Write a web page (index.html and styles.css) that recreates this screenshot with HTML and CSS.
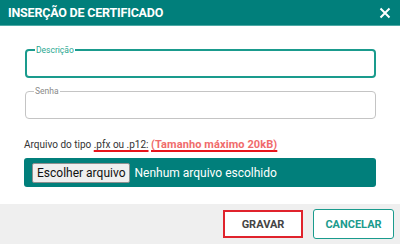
FILE: index.html
```html
<!DOCTYPE html>
<html lang="pt-BR">
<head>
    <meta charset="UTF-8">
    <meta name="viewport" content="width=device-width, initial-scale=1.0">
    <title>Inserção de Certificado</title>
    <link rel="stylesheet" href="styles.css">
</head>
<body>
    <div class="modal">
        <div class="modal-header">
            <h1>Inserção de Certificado</h1>
            <button class="close" type="button" aria-label="Fechar">
                <svg width="12" height="12" viewBox="0 0 12 12">
                    <path d="M1.5 1.5 L10.5 10.5 M10.5 1.5 L1.5 10.5" stroke="#fff" stroke-width="2" fill="none"/>
                </svg>
            </button>
        </div>

        <form class="modal-body">
            <fieldset class="field active">
                <legend>Descrição</legend>
                <input type="text">
            </fieldset>

            <fieldset class="field">
                <legend>Senha</legend>
                <input type="password">
            </fieldset>

            <p class="hint">Arquivo do tipo <span class="mark">.pfx ou .p12:</span> <span class="mark warn">(Tamanho máximo 20kB)</span></p>

            <div class="file-bar">
                <span class="file-btn">Escolher arquivo</span>
                <span class="file-name">Nenhum arquivo escolhido</span>
            </div>
        </form>

        <div class="modal-footer">
            <button class="btn btn-save" type="button">Gravar</button>
            <button class="btn btn-cancel" type="button">Cancelar</button>
        </div>
    </div>
</body>
</html>
```

FILE: styles.css
```css
body {
    margin: 0;
    font-family: 'Roboto', 'Liberation Sans', sans-serif;
    background: #fff;
}

.modal {
    width: 400px;
    height: 244px;
    display: flex;
    flex-direction: column;
}

.modal-header {
    height: 26px;
    background: #017f7b;
    border-bottom: 1px solid #4da9a5;
    box-sizing: border-box;
    display: flex;
    align-items: center;
    justify-content: space-between;
    padding: 0 8px 0 8px;
}

.modal-header h1 {
    margin: 0;
    font-size: 12.5px;
    font-weight: 700;
    text-transform: uppercase;
    color: #fff;
    letter-spacing: -0.2px;
}

.close {
    background: none;
    border: none;
    padding: 0;
    display: flex;
    margin-right: 1px;
}

.modal-body {
    flex: 1;
    padding: 20px 24px 0 24px;
    display: flex;
    flex-direction: column;
}

.field {
    margin: 0 0 0 1px;
    padding: 0 6px;
    height: 32px;
    box-sizing: border-box;
    border: 1px solid #c4c4c4;
    border-radius: 4px;
    display: flex;
    align-items: center;
}

.field + .field {
    margin-top: 9px;
}

.field legend {
    font-size: 8.5px;
    color: #8a8a8a;
    padding: 0 1px;
    margin-left: 2px;
    line-height: 8px;
}

.field.active {
    border: 2px solid #1a9b8d;
}

.field.active legend {
    color: #2aa892;
}

.field input {
    border: none;
    outline: none;
    width: 100%;
    background: transparent;
}

.hint {
    margin: 19px 0 0 0;
    font-size: 10px;
    color: #333;
    line-height: 13px;
}

.mark {
    text-decoration: underline;
    text-decoration-color: #e8141b;
    text-decoration-thickness: 2px;
    text-underline-offset: 2px;
}

.warn {
    color: #f06b6b;
    font-weight: 700;
    font-size: 11px;
    letter-spacing: 0.1px;
}

.file-bar {
    margin-top: 7px;
    height: 29px;
    background: #017f7b;
    border-radius: 3px;
    display: flex;
    align-items: center;
    padding: 0 8px;
    gap: 4px;
}

.file-btn {
    background: #efefef;
    border: 1px solid #8f8f8f;
    border-radius: 2px;
    font-size: 12px;
    color: #111;
    height: 20px;
    line-height: 19px;
    padding: 0 4px;
    box-sizing: border-box;
}

.file-name {
    color: #fff;
    font-size: 12px;
}

.modal-footer {
    height: 40px;
    background: #efefef;
    display: flex;
    align-items: center;
    justify-content: flex-end;
    gap: 10px;
    padding: 0 6px 0 0;
}

.btn {
    font-family: 'Roboto', 'Liberation Sans', sans-serif;
    font-size: 11px;
    font-weight: 700;
    text-transform: uppercase;
    height: 29px;
    background: #fff;
    border-radius: 3px;
    cursor: pointer;
}

.btn-save {
    width: 80px;
    color: #444;
    border: 2px solid #e0232c;
    border-radius: 0;
    height: 28px;
}

.btn-cancel {
    width: 81px;
    color: #1a9b8d;
    border: 1px solid #1a9b8d;
    height: 30px;
}
```
